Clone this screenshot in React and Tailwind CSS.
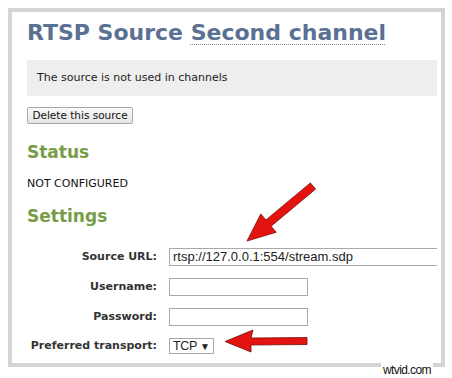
export default function App() {
  const verdana = { fontFamily: '"DejaVu Sans", Verdana, sans-serif' };
  return (
    <div className="relative w-[452px] h-[378px] bg-white overflow-hidden" style={verdana}>
      <div className="ml-[8px] mt-[8px] w-[437px] h-[359px] border-4 border-[#d4d4d4] box-border pl-[15px] pr-[4px] pt-[7px]">
        <h1 className="text-[22px] leading-[28px] font-bold text-[#5a7193] whitespace-nowrap">
          RTSP Source{' '}
          <span className="underline decoration-dotted decoration-[#8c8c8c] decoration-1 underline-offset-[4px]">
            Second channel
          </span>
        </h1>
        <div className="mt-[13px] h-[36px] bg-[#eeeeee] pl-[10px] text-[11px] leading-[36px] text-[#222]">
          The source is not used in channels
        </div>
        <div className="mt-[11px] flex">
          <div className="h-[17px] w-[106px] flex items-center justify-center border border-[#a8a8a8] bg-gradient-to-b from-[#fafafa] to-[#e4e4e4] text-[10.5px] text-[#111] rounded-[2px]">
            Delete this source
          </div>
        </div>
        <h2 className="mt-[18px] text-[17px] leading-[20px] font-bold text-[#779c46]">Status</h2>
        <div className="mt-[15px] text-[11px] leading-[14px] text-[#111]">NOT CONFIGURED</div>
        <h2 className="mt-[15px] text-[17px] leading-[20px] font-bold text-[#779c46]">Settings</h2>
        <div className="mt-[22px] grid grid-cols-[130px_1fr] gap-x-[12px] gap-y-[12px] items-center">
          <div className="text-right text-[11px] font-bold text-[#333]">Source URL:</div>
          <div
            className="h-[18px] border border-r-0 border-[#a9a9a9] pl-[3px] text-[13px] leading-[16px] text-[#222]"
            style={{ fontFamily: '"Liberation Sans", Arial, sans-serif' }}
          >
            rtsp://127.0.0.1:554/stream.sdp
          </div>
          <div className="text-right text-[11px] font-bold text-[#333]">Username:</div>
          <div className="h-[18px] w-[139px] border border-[#a9a9a9]" />
          <div className="text-right text-[11px] font-bold text-[#333]">Password:</div>
          <div className="h-[18px] w-[139px] border border-[#a9a9a9]" />
          <div className="text-right text-[11px] font-bold text-[#333] whitespace-nowrap">Preferred transport:</div>
          <div className="flex">
            <div
              className="h-[16px] w-[45px] border border-[#a9a9a9] pl-[3px] flex items-center gap-[3px] text-[12.5px] text-[#222]"
              style={{ fontFamily: '"Liberation Sans", Arial, sans-serif' }}
            >
              <span className="tracking-[-0.3px]">TCP</span>
              <span className="text-[10px]">▼</span>
            </div>
          </div>
        </div>
      </div>

      <svg className="absolute left-0 top-0 pointer-events-none" width="452" height="378" viewBox="0 0 452 378">
        <polygon
          points="310.4,182.9 265.9,220.0 260.8,213.9 247,241 276.2,232.3 271.1,226.2 315.6,189.1"
          fill="#e3140f"
          stroke="#7a0b08"
          strokeWidth="0.8"
          strokeLinejoin="round"
        />
        <polygon
          points="307,337.5 251,338 253,330 225,341.5 251,352 251,345 307,344.5"
          fill="#e3140f"
          stroke="#7a0b08"
          strokeWidth="0.8"
          strokeLinejoin="round"
        />
      </svg>

      <div
        className="absolute left-[381px] top-[363px] bg-white px-[2px] text-[12px] leading-[14px] tracking-[-0.6px] text-[#111]"
        style={{ fontFamily: '"Liberation Sans", Arial, sans-serif' }}
      >
        wtvid.com
      </div>
    </div>
  );
}
